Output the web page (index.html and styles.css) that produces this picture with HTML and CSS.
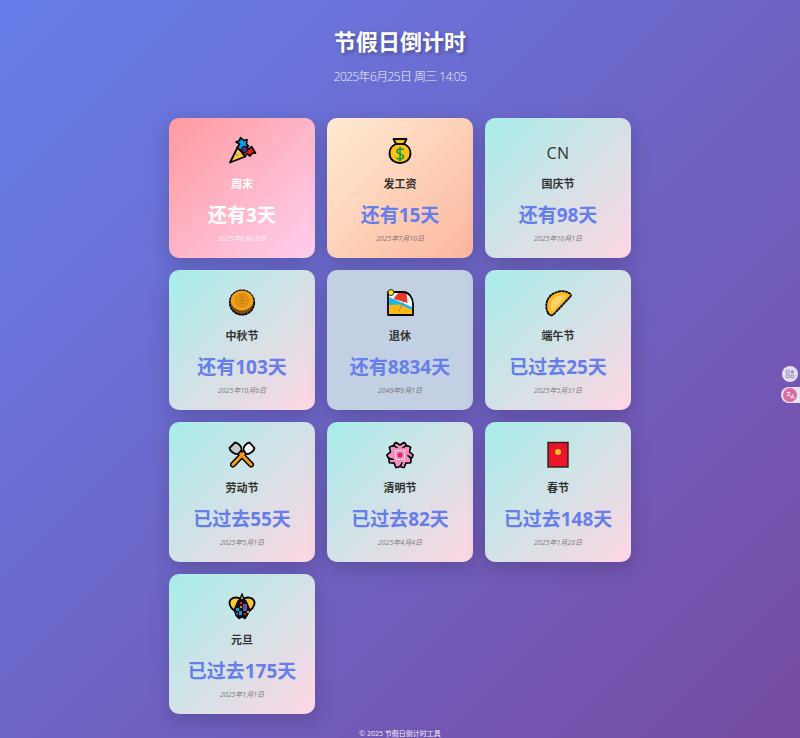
FILE: index.html
```html
<!DOCTYPE html>
<html lang="zh-CN">
<head>
    <meta charset="UTF-8">
    <meta name="viewport" content="width=device-width, initial-scale=1.0">
    <title>节假日倒计时</title>
    <link rel="stylesheet" href="styles.css">
</head>
<body>
    <div class="header">
        <h1 class="title">节假日倒计时</h1>
        <div class="now">2025年6月25日 周三 14:05</div>
    </div>

    <div class="grid">
        <div class="card weekend">
            <div class="icon">
                <svg viewBox="0 0 32 32" width="32" height="32">
                    <path d="M4 27.500 L11.500 12.500 L19.500 21.500 Z" fill="#fcc53c" stroke="#000" stroke-width="1.800" stroke-linejoin="round"/>
                    <path d="M11 13 L13.500 9 L10 7 L13.500 5.500 L14.500 2.500 L18 5.500 L21 4.500 L20.500 9 L22.500 11 L18 12.500 L16 16 Z" fill="#0f9ad6" stroke="#000" stroke-width="1.600" stroke-linejoin="round"/>
                    <path d="M16.500 18 L20 12 L23 14 L25.500 11.500 L29.500 18 L26 18.500 L24 21 L21 19 L18.500 21 Z" fill="#d8201c" stroke="#000" stroke-width="1.600" stroke-linejoin="round"/>
                    <circle cx="18.500" cy="14.500" r="3" fill="#4a2f8c" stroke="#000" stroke-width="1"/>
                    <circle cx="11" cy="20" r="1" fill="#37b6d8"/>
                </svg>
            </div>
            <div class="name">周末</div>
            <div class="count">还有3天</div>
            <div class="date">2025年6月28日</div>
        </div>

        <div class="card payday">
            <div class="icon">
                <svg viewBox="0 0 32 32" width="32" height="32">
                    <path d="M9.500 4 H22.500 L20 9 C25 11 26.500 15 26.500 18.500 C26.500 24.500 21.500 28 16 28 C10.500 28 5.500 24.500 5.500 18.500 C5.500 15 7 11 12 9 Z" fill="#fcbf14" stroke="#000" stroke-width="1.800" stroke-linejoin="round"/>
                    <path d="M12 9 H20" stroke="#000" stroke-width="1.800"/>
                    <path d="M19.500 15 C18.500 13.500 13 13.500 13 16.500 C13 19.500 19.500 18.500 19.500 21.500 C19.500 24.500 14 24.500 12.500 23 M16 12 V26" fill="none" stroke="#0c9b3c" stroke-width="1.600"/>
                </svg>
            </div>
            <div class="name">发工资</div>
            <div class="count">还有15天</div>
            <div class="date">2025年7月10日</div>
        </div>

        <div class="card">
            <div class="icon flag">CN</div>
            <div class="name">国庆节</div>
            <div class="count">还有98天</div>
            <div class="date">2025年10月1日</div>
        </div>

        <div class="card">
            <div class="icon">
                <svg viewBox="0 0 32 32" width="32" height="32">
                    <circle cx="16" cy="15.500" r="12.300" fill="#7a4a1c" stroke="#000" stroke-width="1.600" stroke-dasharray="3 .4"/>
                    <ellipse cx="16" cy="13.500" rx="11.300" ry="10" fill="#f0a01c"/>
                    <circle cx="16" cy="13.500" r="6.500" fill="#e59414" stroke="#c67c0e" stroke-width=".8"/>
                    <path d="M16 8 V19 M11.500 13.500 H20.500 M13 10.500 H19 M13 16.500 H19" stroke="#c67c0e" stroke-width=".8"/>
                </svg>
            </div>
            <div class="name">中秋节</div>
            <div class="count">还有103天</div>
            <div class="date">2025年10月6日</div>
        </div>

        <div class="card retire">
            <div class="icon">
                <svg viewBox="0 0 32 32" width="32" height="32">
                    <path d="M6 5 H19 C25 5 29 11 29 17 V28 H4 V5 Z" fill="#fff"/>
                    <path d="M5 10 L28 20 V27 L5 18 Z" fill="#1fb5e8"/>
                    <path d="M5 18 L16 17.500 L28 23 V27.300 H4.700 Z" fill="#fdb90f"/>
                    <path d="M10 12 C12 6 18 3.500 22.500 5 L23.500 16 Z" fill="#e8382a"/>
                    <path d="M20 14 L15 24" stroke="#8a8a8a" stroke-width="1"/>
                    <path d="M6 5 H19 C25 5 29 11 29 17 V28 H4 V5 Z" fill="none" stroke="#000" stroke-width="1.800" stroke-linejoin="round"/>
                    <circle cx="7" cy="5.500" r="3" fill="#fde02b" stroke="#000" stroke-width=".8"/>
                </svg>
            </div>
            <div class="name">退休</div>
            <div class="count">还有8834天</div>
            <div class="date">2049年9月1日</div>
        </div>

        <div class="card">
            <div class="icon">
                <svg viewBox="0 0 32 32" width="32" height="32">
                    <path d="M6 26 C2 18 5 8 15 5 C19 3.500 25 4 28.500 7 C29.500 8 29 9 28 10 L12 27 C10 29 7.500 28.500 6 26 Z" fill="#fbb81f" stroke="#000" stroke-width="1.800" stroke-linejoin="round" stroke-dasharray="3 .4"/>
                    <path d="M9.500 23 C7.500 17 10 11 16 9 C19 8 22 8 24 9 L11 24 Z" fill="#fdd36d"/>
                </svg>
            </div>
            <div class="name">端午节</div>
            <div class="count">已过去25天</div>
            <div class="date">2025年5月31日</div>
        </div>

        <div class="card">
            <div class="icon">
                <svg viewBox="0 0 32 32" width="32" height="32">
                    <path d="M9 9 L25 25.500" stroke="#000" stroke-width="6" stroke-linecap="round"/>
                    <path d="M23 9 L7 25.500" stroke="#000" stroke-width="6" stroke-linecap="round"/>
                    <path d="M9 9 L25 25.500" stroke="#f09c14" stroke-width="3.200" stroke-linecap="round"/>
                    <path d="M23 9 L7 25.500" stroke="#f09c14" stroke-width="3.200" stroke-linecap="round"/>
                    <path d="M3.500 9 L9 3.500 C12.500 4 16 7.500 15.500 11 L12 15 C8 15.500 4 12 3.500 9 Z" fill="#c9c9c9" stroke="#000" stroke-width="1.800" stroke-linejoin="round"/>
                    <path d="M28.500 9 L23.500 3.500 C20.500 4 17 7.500 17.500 11 L20 15 C24 15.500 28 12 28.500 9 Z" fill="#f4f4f4" stroke="#000" stroke-width="1.800" stroke-linejoin="round"/>
                </svg>
            </div>
            <div class="name">劳动节</div>
            <div class="count">已过去55天</div>
            <div class="date">2025年5月1日</div>
        </div>

        <div class="card">
            <div class="icon">
                <svg viewBox="0 0 32 32" width="32" height="32">
                    <g fill="#f48fbf" stroke="#000" stroke-width="1.600">
                        <path d="M16 16 C8 13 8 6 12 3.500 L16 6 L20 3.500 C24 6 24 13 16 16 Z"/>
                        <path d="M16 16 C8 13 8 6 12 3.500 L16 6 L20 3.500 C24 6 24 13 16 16 Z" transform="rotate(72 16 16)"/>
                        <path d="M16 16 C8 13 8 6 12 3.500 L16 6 L20 3.500 C24 6 24 13 16 16 Z" transform="rotate(144 16 16)"/>
                        <path d="M16 16 C8 13 8 6 12 3.500 L16 6 L20 3.500 C24 6 24 13 16 16 Z" transform="rotate(216 16 16)"/>
                        <path d="M16 16 C8 13 8 6 12 3.500 L16 6 L20 3.500 C24 6 24 13 16 16 Z" transform="rotate(288 16 16)"/>
                    </g>
                    <circle cx="16" cy="16" r="7.500" fill="#f48fbf"/>
                    <rect x="11.500" y="11.500" width="9" height="9" fill="none" stroke="#fff" stroke-width="1" stroke-dasharray="1.500 1"/>
                    <circle cx="16" cy="16" r="2.500" fill="#e0216b"/>
                </svg>
            </div>
            <div class="name">清明节</div>
            <div class="count">已过去82天</div>
            <div class="date">2025年4月4日</div>
        </div>

        <div class="card">
            <div class="icon">
                <svg viewBox="0 0 32 32" width="32" height="32">
                    <rect x="6" y="3.500" width="20" height="24.500" fill="#ec1527" stroke="#222" stroke-width="1.400"/>
                    <path d="M6.500 5.500 L16 11 L25.500 5.500" fill="none" stroke="#b30f1e" stroke-width=".6"/>
                    <circle cx="16" cy="13" r="3" fill="#fcc21b"/>
                </svg>
            </div>
            <div class="name">春节</div>
            <div class="count">已过去148天</div>
            <div class="date">2025年1月28日</div>
        </div>

        <div class="card">
            <div class="icon">
                <svg viewBox="0 0 32 32" width="32" height="32">
                    <path d="M16 9 C12 5 5 6 3.500 11 C3 15 7 20 11 21 L21 21 C25 20 29 15 28.500 11 C27 6 20 5 16 9 Z" fill="#fcc53c" stroke="#000" stroke-width="1.800"/>
                    <path d="M16 3 L18.500 9 H13.500 Z" fill="#9a9a9a" stroke="#000" stroke-width="1.200"/>
                    <path d="M12 9.500 C14 8.500 18 8.500 20 9.500 L24 19 L21 25 L19 28 L16 26 L13 28 L10 25 L8 19 Z" fill="#111" stroke="#000" stroke-width="1"/>
                    <circle cx="15" cy="12" r="1.200" fill="#e0241f"/>
                    <rect x="17" y="13" width="4" height="7" fill="#6a4bb0"/>
                    <rect x="10" y="17" width="3" height="3" fill="#0f9ad6"/>
                    <rect x="13" y="20" width="3" height="4" fill="#0f9ad6"/>
                    <circle cx="19" cy="23" r="1.200" fill="#e0241f"/>
                    <circle cx="11" cy="22.500" r="1.100" fill="#0f9ad6"/>
                    <circle cx="15" cy="16" r="1" fill="#fcc53c"/>
                    <circle cx="22" cy="21" r="1" fill="#fde02b"/>
                </svg>
            </div>
            <div class="name">元旦</div>
            <div class="count">已过去175天</div>
            <div class="date">2025年1月1日</div>
        </div>
    </div>

    <div class="footer">© 2025 节假日倒计时工具</div>

    <div class="float-btn">
        <svg viewBox="0 0 12 12" width="10" height="10">
            <path d="M1.500 1.500 H5 V5 H1.500 Z M1.500 7 H5 V10.500 H1.500 Z M7 7 H10.500 V10.500 H7 Z" fill="none" stroke="#8a83ac" stroke-width="1"/>
            <circle cx="8.700" cy="3.200" r="1.800" fill="#8a83ac"/>
        </svg>
    </div>
    <div class="float-pill">
        <span class="pill-dot">
            <svg viewBox="0 0 12 12" width="10" height="10">
                <path d="M2 3 H6 M4 2 V3 M5.500 3 C5 6 3.500 7 2 8 M3 5 C4 6.500 5 7 6.500 7.500 M7 10.500 L9 5 L11 10.500 M7.800 9 H10.200" fill="none" stroke="#fff" stroke-width="1"/>
            </svg>
        </span>
    </div>
</body>
</html>
```
FILE: styles.css
```css
html {
    height: 100%;
}
body {
    font-family: 'Open Sans', 'Noto Sans CJK SC', sans-serif;
    background: linear-gradient(135deg, #667eea 0%, #764ba2 100%);
    color: #333;
    margin: 0;
    height: 738px;
    overflow: hidden;
    display: flex;
    flex-direction: column;
    align-items: center;
}
.header {
    text-align: center;
    color: #fff;
    padding-top: 24px;
    margin-bottom: 32px;
}
.title {
    font-size: 22px;
    line-height: 34px;
    font-weight: 700;
    margin: 0 0 10px;
    text-shadow: 2px 2px 4px rgba(0, 0, 0, 0.3);
}
.now {
    font-size: 12px;
    line-height: 18px;
    font-weight: 300;
    letter-spacing: -0.62px;
    opacity: 0.9;
}
.grid {
    display: grid;
    grid-template-columns: repeat(3, 146px);
    grid-auto-rows: 140px;
    gap: 12px;
}
.card {
    background: linear-gradient(135deg, #a8edea 0%, #fed6e3 100%);
    border-radius: 10px;
    box-shadow: 0 6px 20px rgba(0, 0, 0, 0.18);
    display: flex;
    flex-direction: column;
    align-items: center;
    padding-top: 17px;
    box-sizing: border-box;
}
.weekend {
    background: linear-gradient(135deg, #ff9a9e 0%, #fecfef 100%);
    color: #fff;
}
.payday {
    background: linear-gradient(135deg, #ffecd2 0%, #fcb69f 100%);
}
.retire {
    background: #c3cfe2;
}
.icon {
    height: 32px;
    margin-bottom: 9px;
}
.icon svg {
    display: block;
}
.flag {
    font-size: 16px;
    line-height: 36px;
    letter-spacing: 0.5px;
}
.name {
    font-size: 11px;
    line-height: 16px;
    font-weight: 700;
    margin-bottom: 9px;
}
.count {
    font-size: 19px;
    line-height: 28px;
    font-weight: 700;
    color: #667eea;
    margin-bottom: 3px;
}
.weekend .count {
    color: #fff;
}
.date {
    font-size: 7px;
    line-height: 14px;
    font-style: italic;
    color: #666;
    opacity: 0.8;
}
.weekend .date {
    color: #fff;
}
.footer {
    margin-top: 15px;
    font-size: 7px;
    line-height: 10px;
    color: #fff;
    opacity: 0.9;
}
/* side widget, sits over the page */
.float-btn {
    position: absolute;
    left: 782px;
    top: 366px;
    width: 16px;
    height: 16px;
    border-radius: 50%;
    background: #e4dff0;
    display: flex;
    align-items: center;
    justify-content: center;
}
.float-pill {
    position: absolute;
    left: 781px;
    top: 387px;
    width: 19px;
    height: 16px;
    border-radius: 8px 0 0 8px;
    background: #e9e4f2;
    display: flex;
    align-items: center;
    padding-left: 2px;
    box-sizing: border-box;
}
.pill-dot {
    width: 14px;
    height: 14px;
    border-radius: 50%;
    background: #dc6a9e;
    display: flex;
    align-items: center;
    justify-content: center;
}
```
